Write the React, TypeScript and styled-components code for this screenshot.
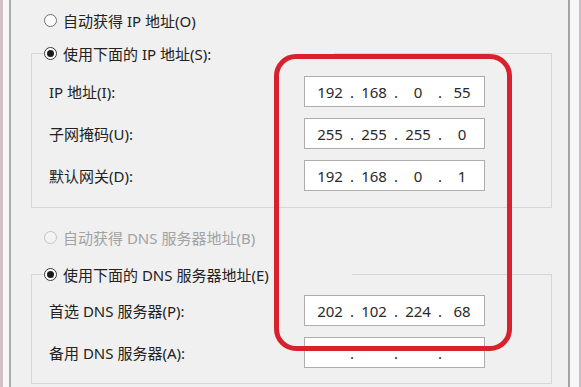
import React from 'react';
import styled, { createGlobalStyle } from 'styled-components';

const Global = createGlobalStyle`
  html, body { margin: 0; padding: 0; background: #f0f0f0; }
  body { font-family: "Noto Sans", "Noto Sans CJK SC", sans-serif; }
`;

const Screen = styled.div`
  position: relative;
  display: flex;
  width: 581px;
  height: 387px;
  overflow: hidden;
  background: #f0f0f0;
  color: #222;
  font-size: 15px;
`;

const EdgeLeft = styled.div`
  flex: none;
  width: 6px;
  background: #f7f7f7;
  border-left: 3px solid #cfc0c6;
  border-right: 2px solid #a9aeab;
`;

const EdgeRight = styled.div`
  flex: none;
  width: 9px;
  background: #f7f7f7;
  border-left: 2px solid #a3a3a3;
  border-right: 2px solid #cdbdc4;
`;

const Content = styled.div`
  flex: 1;
  display: flex;
  flex-direction: column;
  padding: 10px 16px 0 20px;
`;

const RadioRow = styled.div<{ $disabled?: boolean; $top?: number }>`
  display: flex;
  align-items: center;
  gap: 6px;
  height: 20px;
  margin: ${p => p.$top ?? 0}px 0 0 13px;
  color: ${p => (p.$disabled ? '#a2a2a2' : '#222')};
  white-space: nowrap;
`;

const Radio = styled.span<{ $state: 'off' | 'on' | 'disabled' }>`
  flex: none;
  box-sizing: border-box;
  width: 13px;
  height: 13px;
  border-radius: 50%;
  display: flex;
  align-items: center;
  justify-content: center;
  border: 1px solid
    ${p => (p.$state === 'disabled' ? '#c4c4c4' : p.$state === 'on' ? '#3a3a3a' : '#707070')};
  background: ${p => (p.$state === 'disabled' ? '#f3f3f3' : '#fff')};
  &::after {
    content: '';
    display: ${p => (p.$state === 'on' ? 'block' : 'none')};
    width: 7px;
    height: 7px;
    border-radius: 50%;
    background: #1a1a1a;
  }
`;

const Group = styled.fieldset<{ $top: number; $padTop: number; $padBottom: number }>`
  margin: ${p => p.$top}px 0 0;
  padding: ${p => p.$padTop}px 66px ${p => p.$padBottom}px 12px;
  border: 1px solid #d6d6d6;
  min-width: 0;
  display: grid;
  row-gap: 11px;
`;

const Legend = styled.legend<{ $width: number }>`
  padding: 0;
  margin: 0;
  width: ${p => p.$width}px;
  height: 20px;
  display: flex;
  align-items: center;
  gap: 6px;
  white-space: nowrap;
  background: #f0f0f0;
`;

const FieldRow = styled.div`
  display: flex;
  align-items: center;
  justify-content: space-between;
  height: 31px;
  padding-left: 5px;
`;

const Label = styled.span`
  white-space: nowrap;
`;

const IpBox = styled.div`
  box-sizing: border-box;
  width: 181px;
  height: 31px;
  display: flex;
  align-items: center;
  padding-left: 5px;
  background: #fff;
  border: 1px solid #adadad;
  color: #2a2a2a;
  font-family: "Noto Sans", sans-serif;
`;

const Octet = styled.span`
  width: 40px;
  text-align: center;
`;

const Dot = styled.span`
  width: 4px;
  text-align: center;
`;

const Annotation = styled.div`
  position: absolute;
  left: 274px;
  top: 54px;
  width: 238px;
  height: 297px;
  box-sizing: border-box;
  border: 5px solid #d7222d;
  border-radius: 22px;
  pointer-events: none;
`;

function IpField({ value }: { value: string[] }) {
  return (
    <IpBox>
      {value.map((v, i) => (
        <React.Fragment key={i}>
          {i > 0 && <Dot>.</Dot>}
          <Octet>{v}</Octet>
        </React.Fragment>
      ))}
    </IpBox>
  );
}

export default function App() {
  return (
    <>
      <Global />
      <Screen>
        <EdgeLeft />
        <Content>
          <RadioRow>
            <Radio $state="off" />
            <span>自动获得 IP 地址(O)</span>
          </RadioRow>
          <Group $top={13} $padTop={13} $padBottom={16}>
            <Legend $width={290}>
              <Radio $state="on" />
              <span>使用下面的 IP 地址(S):</span>
            </Legend>
            <FieldRow>
              <Label>IP 地址(I):</Label>
              <IpField value={['192', '168', '0', '55']} />
            </FieldRow>
            <FieldRow>
              <Label>子网掩码(U):</Label>
              <IpField value={['255', '255', '255', '0']} />
            </FieldRow>
            <FieldRow>
              <Label>默认网关(D):</Label>
              <IpField value={['192', '168', '0', '1']} />
            </FieldRow>
          </Group>
          <RadioRow $disabled $top={19}>
            <Radio $state="disabled" />
            <span>自动获得 DNS 服务器地址(B)</span>
          </RadioRow>
          <Group $top={17} $padTop={11} $padBottom={15}>
            <Legend $width={308}>
              <Radio $state="on" />
              <span>使用下面的 DNS 服务器地址(E)</span>
            </Legend>
            <FieldRow>
              <Label>首选 DNS 服务器(P):</Label>
              <IpField value={['202', '102', '224', '68']} />
            </FieldRow>
            <FieldRow>
              <Label>备用 DNS 服务器(A):</Label>
              <IpField value={['', '', '', '']} />
            </FieldRow>
          </Group>
        </Content>
        <EdgeRight />
        <Annotation />
      </Screen>
    </>
  );
}
